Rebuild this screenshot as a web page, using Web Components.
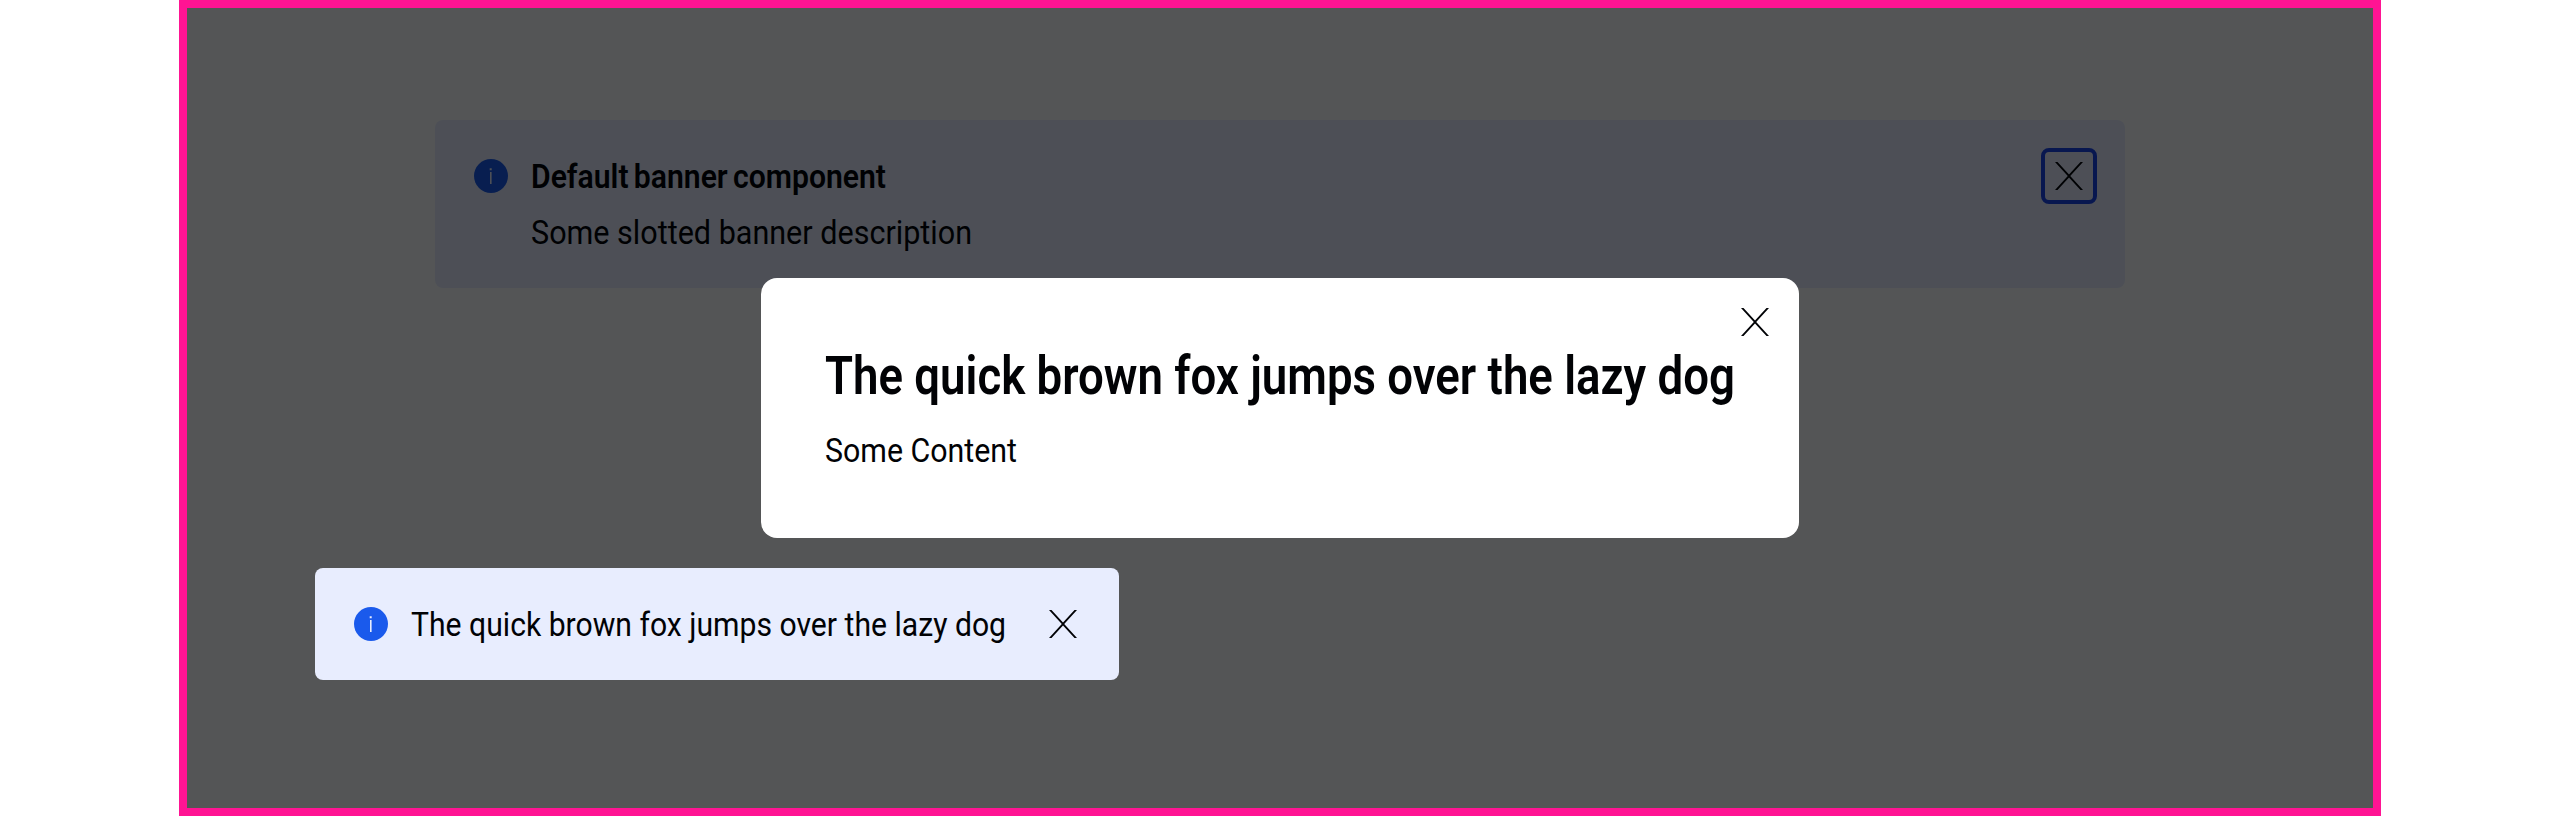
<!DOCTYPE html>
<html lang="en"><head><meta charset="utf-8"><title>Overlays</title>
<style>html,body{margin:0;background:#fff;height:816px;overflow:hidden}</style></head><body>
<demo-stage>
  <info-banner slot="page"><fit-text slot="title" width="355" weight="600" space="-2.5">Default banner component</fit-text><fit-text width="441">Some slotted banner description</fit-text></info-banner>
  <app-modal slot="modal"><fit-text slot="title" width="910" size="53" line="64" weight="600">The quick brown fox jumps over the lazy dog</fit-text><fit-text width="192">Some Content</fit-text></app-modal>
  <app-toast slot="toast"><fit-text width="595">The quick brown fox jumps over the lazy dog</fit-text></app-toast>
</demo-stage>
<script>
const define=(name,html,setup)=>customElements.define(name,class extends HTMLElement{
  constructor(){super();this.attachShadow({mode:'open'}).innerHTML=html}
  connectedCallback(){if(setup)setup(this)}
});
// Condensed text: the line is scaled horizontally to the requested advance width.
define('fit-text',`<style>:host{display:block;color:#010205;font-family:Roboto,"Liberation Sans",sans-serif}span{display:inline-block;white-space:nowrap;transform-origin:0 50%}</style><span><slot></slot></span>`,el=>{
  const s=el.shadowRoot.querySelector('span'),w=+el.getAttribute('width'),line=el.getAttribute('line')||48;
  el.style.cssText=`width:${w}px;height:${line}px;line-height:${line}px;font-size:${el.getAttribute('size')||34}px;font-weight:${el.getAttribute('weight')||400};word-spacing:${el.getAttribute('space')||0}px`;
  s.style.transform=`scaleX(${w/s.getBoundingClientRect().width})`;
});
define('info-icon',`<style>:host{display:block;width:34px;height:34px}svg{display:block}</style>
<svg width="34" height="34" viewBox="0 0 34 34"><circle cx="17" cy="17" r="17" fill="#1a5aec"/><path d="M15.7 9.3h2v2h-2zM16 13h1.6v12H16z" fill="#e8edfe"/></svg>`);
define('close-button',`<style>:host{display:grid;place-items:center;width:48px;height:48px;border:4px solid transparent;border-radius:8px}:host([focused]){border-color:#1a44ea}svg{display:block}</style>
<svg width="28" height="28" viewBox="0 0 28 28"><path d="M0 0h2.5L14 12.6 25.5 0H28L15.2 14 28 28h-2.5L14 15.4 2.5 28H0L12.8 14z" fill="#010205"/></svg>`);
define('info-banner',`<style>:host{display:flex;box-sizing:border-box;width:1690px;height:168px;padding:28px 28px 28px 39px;border-radius:8px;background:#e8edfe}info-icon{margin-top:11px}.c{flex:1;padding:4px 0 0 23px}.c ::slotted([slot=title]){margin-bottom:8px}</style>
<info-icon></info-icon><div class="c"><slot name="title"></slot><slot></slot></div><close-button focused></close-button>`);
define('app-modal',`<style>:host{display:block;box-sizing:border-box;width:1038px;height:260px;padding:66px 64px;border-radius:16px;background:#fff;position:relative}close-button{position:absolute;right:16px;top:16px}::slotted([slot=title]){margin-bottom:18px}</style>
<close-button></close-button><slot name="title"></slot><slot></slot>`);
define('app-toast',`<style>:host{display:flex;align-items:center;box-sizing:border-box;width:804px;height:112px;padding:0 28px 0 39px;border-radius:8px;background:#e8edfe}.t{flex:1;padding-left:23px}</style>
<info-icon></info-icon><div class="t"><slot></slot></div><close-button></close-button>`);
define('demo-stage',`<style>:host{display:block;position:relative;box-sizing:border-box;width:2202px;height:816px;margin-left:179px;border:8px solid #ff1493}
.page{display:flex;justify-content:center;padding-top:112px}.shade{position:absolute;inset:0;background:rgba(0,1,3,.67)}
.modal{position:absolute;left:574px;top:270px}.toast{position:absolute;left:128px;top:560px}</style>
<div class="page"><slot name="page"></slot></div><div class="shade"></div><div class="modal"><slot name="modal"></slot></div><div class="toast"><slot name="toast"></slot></div>`);
</script></body></html>
